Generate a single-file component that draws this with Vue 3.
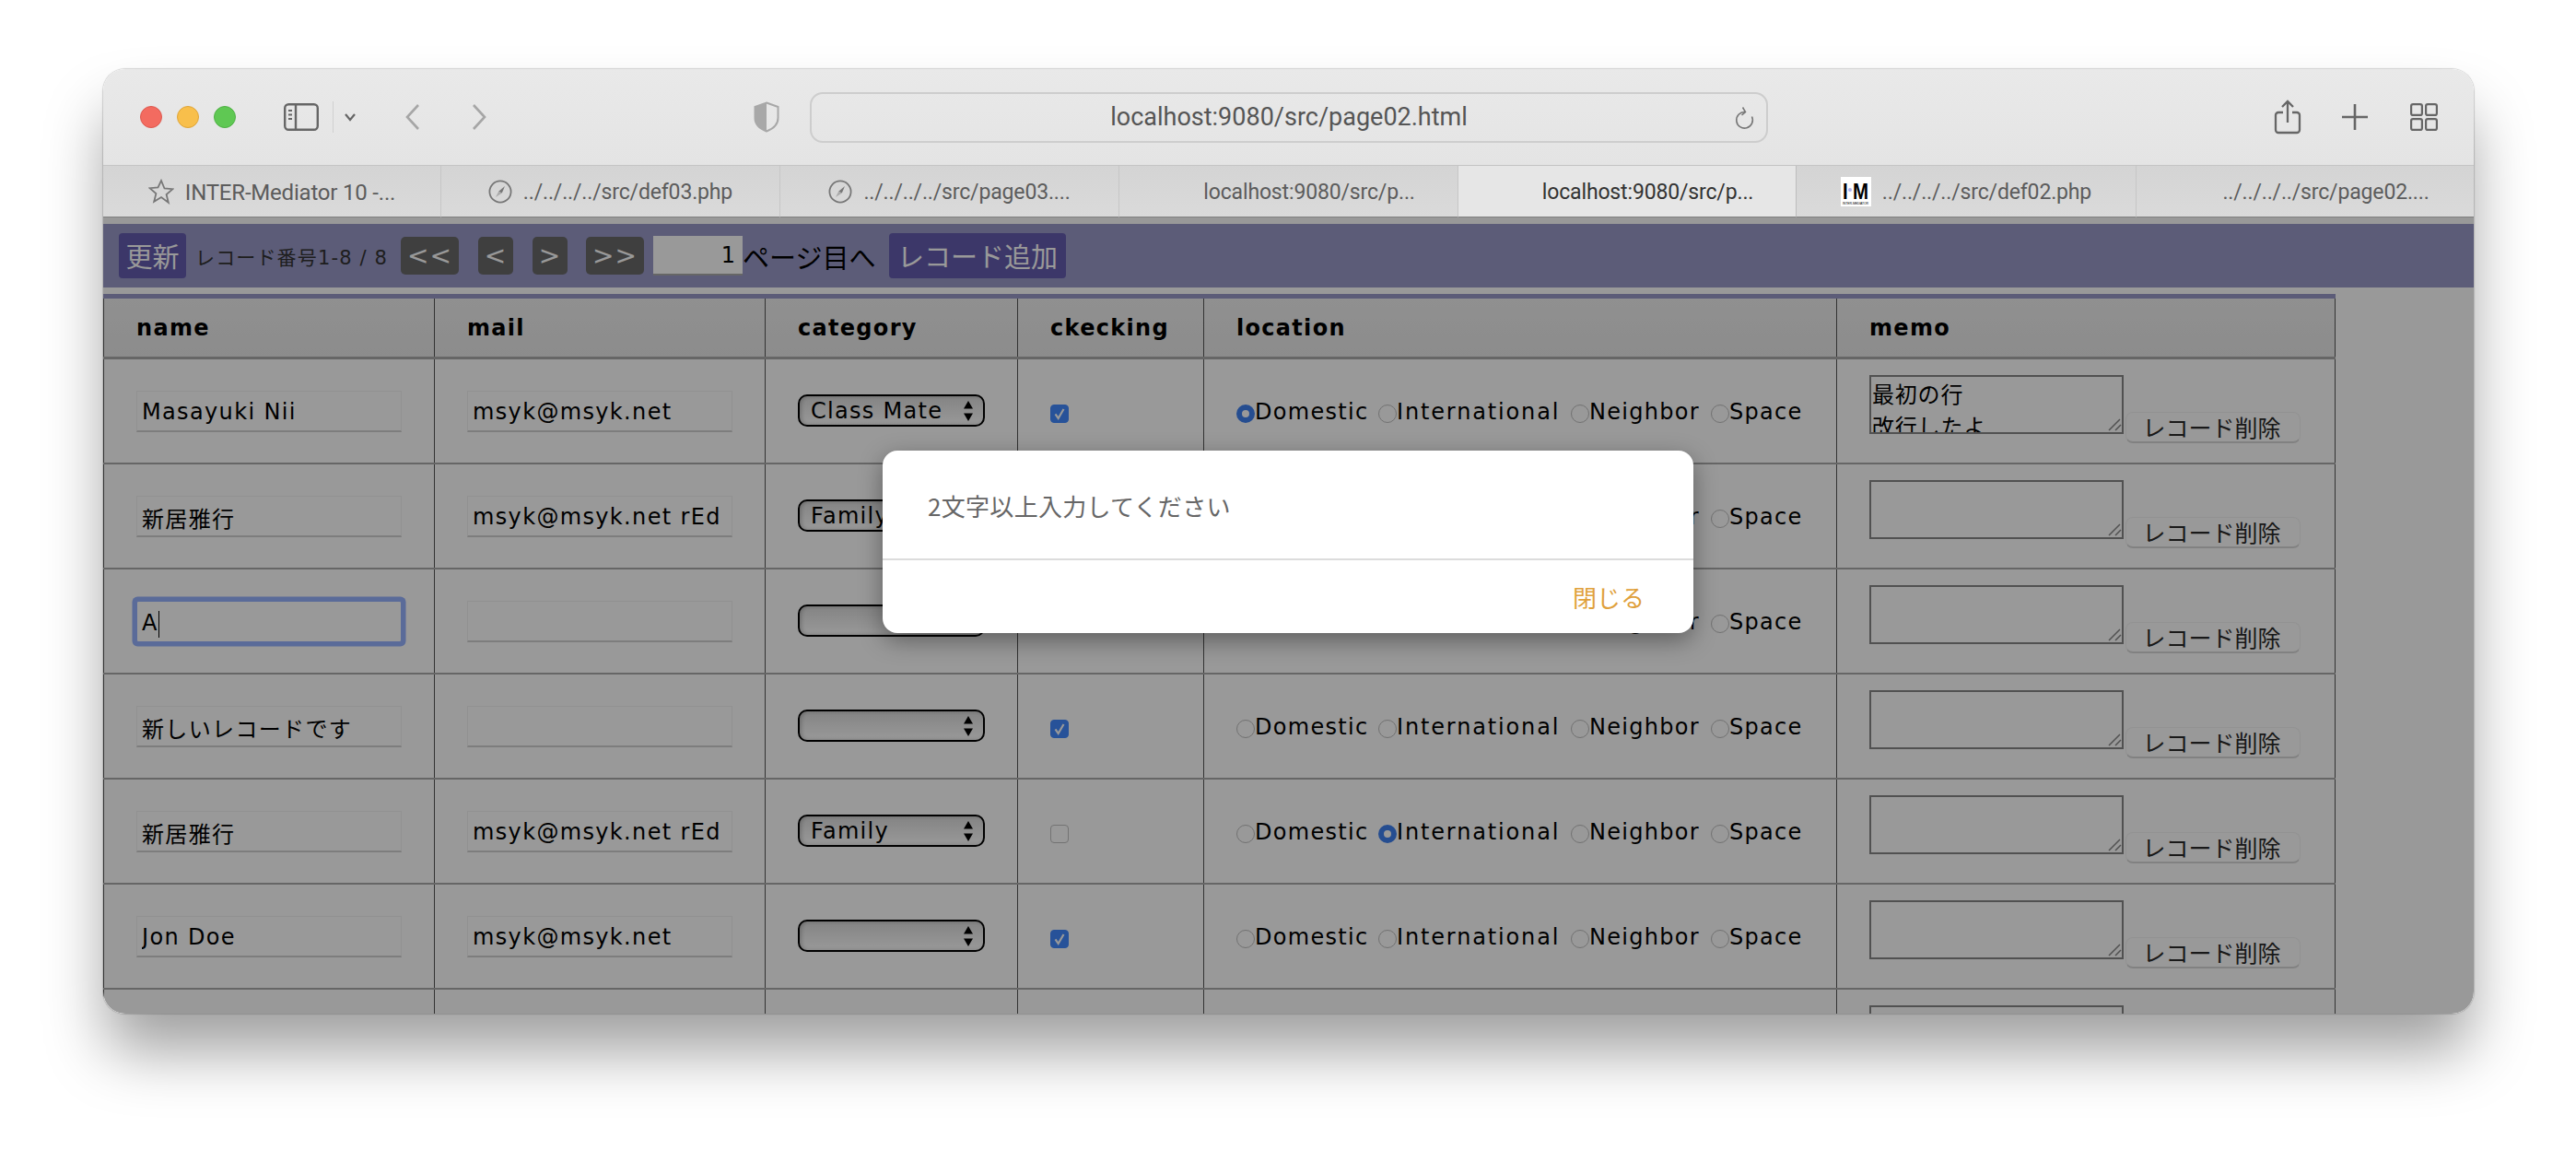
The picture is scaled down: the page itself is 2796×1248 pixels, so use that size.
<script setup>
const tabs = [
  { text: 'INTER-Mediator 10 -...', icon: 'star', w: 367, wide: true },
  { text: '../../../../src/def03.php', icon: 'compass', w: 368 },
  { text: '../../../../src/page03....', icon: 'compass', w: 368 },
  { text: 'localhost:9080/src/p...', icon: 'blank', w: 368 },
  { text: 'localhost:9080/src/p...', icon: 'blank', w: 367, active: true },
  { text: '../../../../src/def02.php', icon: 'im', w: 369 },
  { text: '../../../../src/page02....', icon: 'blank', w: 366 }
]
const places = [
  { label: 'Domestic', w: 154 },
  { label: 'International', w: 209 },
  { label: 'Neighbor', w: 152 },
  { label: 'Space', w: 100 }
]
const rows = [
  { name: 'Masayuki Nii', mail: 'msyk@msyk.net', cat: 'Class Mate', check: true, loc: 'Domestic', memo: '最初の行\n改行したよ' },
  { name: '新居雅行', mail: 'msyk@msyk.net rEd', cat: 'Family', check: false, loc: '', memo: '' },
  { name: 'A', mail: '', cat: '', check: false, loc: '', memo: '', focus: true },
  { name: '新しいレコードです', mail: '', cat: '', check: true, loc: '', memo: '' },
  { name: '新居雅行', mail: 'msyk@msyk.net rEd', cat: 'Family', check: false, loc: 'International', memo: '' },
  { name: 'Jon Doe', mail: 'msyk@msyk.net', cat: '', check: true, loc: '', memo: '' },
  { name: '', mail: '', cat: '', check: false, loc: '', memo: '', ghost: true }
]
</script>

<template>
  <div class="stage">
    <div class="window">
      <header class="toolbar">
        <span class="light red"></span>
        <span class="light yellow"></span>
        <span class="light green"></span>
        <svg class="sidebar-icon" viewBox="0 0 38 30" fill="none" stroke="#666" stroke-width="2.4">
          <rect x="1.2" y="1.2" width="35.6" height="27.6" rx="4" />
          <path d="M13 1.2V28.8" />
          <path d="M5 8h4M5 12.5h4M5 17h4" stroke-width="1.8" />
        </svg>
        <span class="tool-divider"></span>
        <svg class="chev" viewBox="0 0 14 10" fill="none" stroke="#666" stroke-width="2.2">
          <path d="M2 2l5 6 5-6" />
        </svg>
        <svg class="nav back" viewBox="0 0 18 30" fill="none" stroke="#a6a6a6" stroke-width="2.6">
          <path d="M15 2L3 15l12 13" />
        </svg>
        <svg class="nav forward" viewBox="0 0 18 30" fill="none" stroke="#a6a6a6" stroke-width="2.6">
          <path d="M3 2l12 13L3 28" />
        </svg>
        <svg class="shield" viewBox="0 0 28 34" fill="none">
          <path d="M14 1.5L26.5 6v12c0 7-6 12-12.5 14.5C7.500 30 1.500 25 1.500 18V6z" stroke="#a8a8a8" stroke-width="2" />
          <path d="M14 1.500L1.500 6v12c0 7 6 12 12.500 14.500z" fill="#a8a8a8" />
        </svg>
        <div class="urlbar">
          <span class="url">localhost:9080/src/page02.html</span>
          <svg class="reload" viewBox="0 0 22 26" fill="none" stroke="#777" stroke-width="1.600">
            <path d="M18.500 11.500a8.800 8.800 0 1 1-7.500-5" />
            <path d="M8.500 1.500l3 5-4 3.500" />
          </svg>
        </div>
        <svg class="share" viewBox="0 0 30 38" fill="none" stroke="#666" stroke-width="2.300">
          <path d="M15 25V2M9 8l6-6 6 6" />
          <path d="M10 14H5a3 3 0 0 0-3 3v16a3 3 0 0 0 3 3h20a3 3 0 0 0 3-3V17a3 3 0 0 0-3-3h-5" />
        </svg>
        <svg class="plus" viewBox="0 0 28 28" stroke="#666" stroke-width="2.600">
          <path d="M14 0v28M0 14h28" />
        </svg>
        <svg class="grid-icon" viewBox="0 0 30 30" fill="none" stroke="#666" stroke-width="2.200">
          <rect x="1.100" y="1.100" width="11.800" height="11.800" rx="2" />
          <rect x="17.100" y="1.100" width="11.800" height="11.800" rx="2" />
          <rect x="1.100" y="17.100" width="11.800" height="11.800" rx="2" />
          <rect x="17.100" y="17.100" width="11.800" height="11.800" rx="2" />
        </svg>
      </header>

      <nav class="tabs">
        <div v-for="(t, i) in tabs" :key="i" class="tab" :class="{ active: t.active, wide: t.wide }" :style="{ width: t.w + 'px' }">
          <svg v-if="t.icon === 'star'" class="tab-icon star" viewBox="0 0 28 28" fill="none" stroke="#777" stroke-width="1.800">
            <path d="M14 2l3.500 8.500 9 .7-6.900 5.800 2.200 8.800L14 20l-7.800 4.800 2.200-8.800-6.900-5.800 9-.7z" />
          </svg>
          <svg v-else-if="t.icon === 'compass'" class="tab-icon compass" viewBox="0 0 26 26" fill="none" stroke="#777" stroke-width="1.800">
            <circle cx="13" cy="13" r="11.600" />
            <path d="M18 7l-3.200 7.500-3.600-1.800z" fill="#777" stroke="none" />
            <path d="M8 19l3.200-6.300 3.600 1.800z" fill="#aaa" stroke="none" />
          </svg>
          <svg v-else-if="t.icon === 'im'" class="tab-icon im" viewBox="0 0 33 32">
            <rect width="33" height="32" fill="#fff" />
            <text x="2" y="24" font-size="24" font-weight="700" font-family="Liberation Sans" textLength="28" lengthAdjust="spacingAndGlyphs">I M</text>
            <circle cx="10" cy="14" r="2" fill="#b0b0f0" />
            <text x="2" y="30" font-size="4" font-family="Liberation Sans" textLength="28" lengthAdjust="spacingAndGlyphs">INTER-MEDIATOR</text>
          </svg>
          <span v-else class="tab-icon blank"></span>
          <span class="tab-text">{{ t.text }}</span>
        </div>
      </nav>

      <main class="page">
        <div class="pager">
          <button class="primary refresh">更新</button>
          <span class="record-count">レコード番号1-8 / 8</span>
          <button class="step wide first">&lt;&lt;</button>
          <button class="step prev">&lt;</button>
          <button class="step next">&gt;</button>
          <button class="step wide last">&gt;&gt;</button>
          <input class="page-input" value="1" />
          <span class="page-suffix">ページ目へ</span>
          <button class="primary add">レコード追加</button>
        </div>

        <div class="table">
          <div class="row head">
            <div class="cell c-name">name</div>
            <div class="cell c-mail">mail</div>
            <div class="cell c-cat">category</div>
            <div class="cell c-check">ckecking</div>
            <div class="cell c-loc">location</div>
            <div class="cell c-memo">memo</div>
          </div>
          <div v-for="(r, i) in rows" :key="i" class="row">
            <div class="cell c-name">
              <span v-if="!r.ghost" class="field-wrap" :class="{ focused: r.focus }">
                <input class="field" :value="r.name" />
                <i v-if="r.focus" class="caret"></i>
              </span>
            </div>
            <div class="cell c-mail">
              <input v-if="!r.ghost" class="field" :value="r.mail" />
            </div>
            <div class="cell c-cat">
              <div v-if="!r.ghost" class="select">
                <span>{{ r.cat }}</span>
                <svg class="arrows" viewBox="0 0 12 22" fill="#000">
                  <path d="M6 0l5 8.500H1zM6 22l-5-8.500h10z" />
                </svg>
              </div>
            </div>
            <div class="cell c-check">
              <span v-if="!r.ghost" class="checkbox" :class="{ on: r.check }">
                <svg v-if="r.check" viewBox="0 0 20 20" fill="none" stroke="#fff" stroke-width="2.400">
                  <path d="M5 10.500l3.500 5L15 4.500" />
                </svg>
              </span>
            </div>
            <div class="cell c-loc">
              <template v-if="!r.ghost">
                <label v-for="p in places" :key="p.label" class="radio-item" :class="{ long: p.label === 'International' }" :style="{ width: p.w + 'px' }">
                  <span class="radio" :class="{ on: r.loc === p.label }"></span>{{ p.label }}
                </label>
              </template>
            </div>
            <div class="cell c-memo">
              <span class="memo-wrap">
                <textarea class="memo" :value="r.memo"></textarea>
                <svg class="grip" viewBox="0 0 15 14" fill="none" stroke="#888" stroke-width="1.500">
                  <path d="M1 13L13 1M8 13l6-6" />
                </svg>
              </span>
              <button v-if="!r.ghost" class="delete">レコード削除</button>
            </div>
          </div>
        </div>
      </main>

      <div class="overlay"></div>
      <div class="modal">
        <div class="modal-body">2文字以上入力してください</div>
        <div class="modal-foot"><span class="close">閉じる</span></div>
      </div>
    </div>
  </div>
</template>

<style>
html, body { margin: 0; background: #fff; }
</style>

<style scoped>
.stage {
  width: 2796px;
  height: 1248px;
  padding: 75px 0 0 112px;
  box-sizing: border-box;
  overflow: hidden;
  background: #fff;
}
.window {
  position: relative;
  width: 2573px;
  height: 1025px;
  border-radius: 24px;
  overflow: hidden;
  background: #fff;
}
.stage::before {
  content: '';
  position: absolute;
  left: 112px;
  top: 75px;
  width: 2573px;
  height: 1025px;
  border-radius: 24px;
  box-shadow: 0 0 1px 1px rgba(0, 0, 0, .16), 0 44px 66px -4px rgba(0, 0, 0, .38);
}
.toolbar {
  height: 105px;
  display: flex;
  align-items: center;
  padding-left: 40px;
  box-sizing: border-box;
  background: linear-gradient(#e9e9e9, #e4e4e4);
  border-bottom: 1px solid #c4c4c4;
  position: relative;
}
.light { width: 24px; height: 24px; border-radius: 50%; margin-right: 16px; box-sizing: border-box; }
.red { background: #f36b60; border: 1px solid #dd5a50; }
.yellow { background: #f8bf4b; border: 1px solid #dfa53a; }
.green { background: #5fc853; border: 1px solid #4fb045; }
.sidebar-icon { width: 38px; height: 30px; margin-left: 36px; }
.tool-divider { width: 1px; height: 34px; background: #d0d0d0; margin-left: 15px; }
.chev { width: 14px; height: 10px; margin-left: 11px; }
.nav { width: 18px; height: 30px; }
.back { margin-left: 52px; }
.forward { margin-left: 54px; }
.shield { width: 28px; height: 34px; margin-left: 289px; }
.urlbar {
  width: 1040px;
  height: 55px;
  margin-left: 33px;
  border: 2px solid #cdcdcd;
  border-radius: 14px;
  box-sizing: border-box;
  display: flex;
  align-items: center;
  justify-content: center;
  position: relative;
}
.url { font: 27px Roboto, sans-serif; color: #555; }
.reload { position: absolute; right: 12px; top: 13px; width: 22px; height: 26px; }
.share { width: 30px; height: 38px; margin-left: 549px; }
.plus { width: 28px; height: 28px; margin-left: 44px; }
.grid-icon { width: 30px; height: 30px; margin-left: 46px; }

.tabs { display: flex; height: 56px; }
.tab {
  box-sizing: border-box;
  display: flex;
  align-items: center;
  justify-content: center;
  gap: 12px;
  background: linear-gradient(#d4d4d4, #dadada);
  border-right: 1px solid #c6c6c6;
  border-bottom: 1px solid #808080;
  font: 23px Roboto, sans-serif;
  letter-spacing: -.15px;
  color: #5c5c5c;
}
.tab-text { padding-top: 2px; }
.tab.wide { font-size: 24px; letter-spacing: -.2px; }
.tab.active { background: #e6e6e6; color: #333; border-right: 1px solid #bdbdbd; }
.tab:last-child { border-right: 0; }
.tab-icon.star { width: 28px; height: 28px; }
.tab-icon.compass { width: 26px; height: 26px; }
.tab-icon.im { width: 33px; height: 32px; }
.tab-icon.blank { width: 33px; height: 32px; }

.page { height: 864px; overflow: hidden; padding-top: 7px; box-sizing: border-box; background: #fff; }
.pager {
  height: 69px;
  display: flex;
  align-items: center;
  padding-left: 17px;
  background: #9999c8;
  font-family: "Noto Sans CJK JP", sans-serif;
}
button { font-family: "Noto Sans CJK JP", sans-serif; }
.primary {
  height: 49px;
  padding: 0;
  border: 0;
  border-radius: 4px;
  background: #645daf;
  color: #fff;
  font-size: 29px;
  line-height: 49px;
}
.refresh { width: 73px; }
.add { width: 192px; margin-left: 13px; }
.record-count { margin-left: 10px; width: 210px; font: 21px "DejaVu Sans", "Noto Sans CJK JP", sans-serif; letter-spacing: 1.150px; color: #333; white-space: nowrap; }
.step {
  height: 41px;
  width: 38px;
  padding: 0;
  border: 0;
  border-radius: 5px;
  background: #6a6a6a;
  color: #fff;
  font: 28px "DejaVu Sans", sans-serif;
  letter-spacing: 1px;
}
.step.wide { width: 63px; letter-spacing: 1px; }
.first { margin-left: 13px; }
.prev { margin-left: 21px; }
.next { margin-left: 21px; }
.last { margin-left: 20px; }
.page-input {
  width: 97px;
  height: 43px;
  margin-left: 10px;
  padding: 0 8px 0 0;
  box-sizing: border-box;
  border: 0;
  border-bottom: 2px solid #aaa;
  background: #fff;
  text-align: right;
  font: 24px "DejaVu Sans", sans-serif;
  color: #000;
  outline: none;
}
.page-suffix { font-size: 29px; color: #000; white-space: nowrap; width: 146px; }

.table { margin-top: 7px; width: 2423px; border-top: 5px solid #9999c8; font-family: "DejaVu Sans", "Noto Sans CJK JP", sans-serif; }
.row { display: flex; height: 114px; border-bottom: 2px solid #aaa; box-sizing: border-box; background: #fff; }
.row.head {
  height: 66px;
  border-bottom: 3px solid #aaa;
  background: linear-gradient(#f0f0f0, #eaeaea);
  font-size: 25px;
  font-weight: 700;
  letter-spacing: 1.300px;
  color: #000;
}
.cell {
  box-sizing: border-box;
  display: flex;
  align-items: center;
  border-right: 1px solid #555;
  padding-left: 35px;
  font-size: 24px;
}
.c-name { width: 360px; border-left: 1px solid #555; padding-left: 35px; }
.c-mail { width: 359px; }
.c-cat { width: 274px; }
.c-check { width: 202px; }
.c-loc { width: 687px; }
.c-memo { width: 541px; }
.row:not(.head) .c-memo { align-items: flex-start; padding-top: 17px; }

.field-wrap { position: relative; display: block; height: 45px; }
.field {
  width: 288px;
  height: 45px;
  box-sizing: border-box;
  padding: 3px 1px 0 5px;
  border: 1px solid #f2f2f2;
  border-bottom: 2px solid #d0d0d0;
  background: #fff;
  color: #000;
  font: 24px "DejaVu Sans", "Noto Sans CJK JP", sans-serif;
  letter-spacing: 1.350px;
  outline: none;
}
.focused .field { border: 1px solid #96b2ff; border-radius: 2px; box-shadow: 0 0 0 4.500px #96b2ff; }
.caret { position: absolute; left: 24px; top: 11px; width: 1px; height: 29px; background: #000; }

.select {
  width: 203px;
  height: 35px;
  margin-top: -1px;
  box-sizing: border-box;
  display: flex;
  align-items: center;
  justify-content: space-between;
  padding: 0 10px 0 12px;
  border: 2px solid #000;
  border-radius: 10px;
  background: linear-gradient(#dcdcdc, #fff);
  box-shadow: inset 2px 0 4px rgba(0, 0, 0, .2);
  font-size: 24px;
  letter-spacing: 1.300px;
  color: #000;
  white-space: nowrap;
}
.arrows { width: 12px; height: 22px; }

.checkbox {
  width: 20px;
  height: 20px;
  border-radius: 4px;
  box-sizing: border-box;
  border: 1px solid #c0c0c0;
  margin-top: 5px;
  display: block;
}
.checkbox.on { background: #4189ff; border-color: #4189ff; }
.checkbox svg { display: block; width: 18px; height: 18px; }

.radio-item { display: flex; flex: none; align-items: center; color: #000; letter-spacing: 1.300px; white-space: nowrap; padding-top: 1px; }
.radio-item.long { letter-spacing: 1.850px; }
.radio {
  width: 20px;
  height: 20px;
  box-sizing: border-box;
  border: 1px solid #bdbdbd;
  border-radius: 50%;
  margin-top: 4px;
  flex: none;
}
.radio.on { border: 6px solid #3f80f0; background: #fff; }

.memo-wrap { position: relative; display: block; width: 276px; height: 64px; }
.memo {
  display: block;
  width: 276px;
  height: 64px;
  box-sizing: border-box;
  padding: 0 1px;
  border: 2px solid #888;
  border-radius: 0;
  background: #fff;
  color: #000;
  font: 24px/35px "Noto Sans CJK JP", sans-serif;
  letter-spacing: .8px;
  outline: none;
  overflow: hidden;
  resize: none;
}
.grip { position: absolute; right: 2px; bottom: 3px; width: 15px; height: 14px; }
.delete {
  width: 190px;
  height: 34px;
  margin: 40px 0 0 2px;
  padding: 0 3px 0 0;
  border: 1px solid #f4f4f4;
  border-bottom: 2px solid #d8d8d8;
  border-radius: 8px;
  background: #fff;
  color: #2a2a2a;
  font-size: 25px;
  line-height: 27px;
}

.overlay { position: absolute; left: 0; right: 0; top: 161px; bottom: 0; background: rgba(0, 0, 0, .4); }
.modal {
  position: absolute;
  left: 846px;
  top: 414px;
  width: 880px;
  height: 198px;
  border-radius: 16px;
  background: #fff;
  box-shadow: 0 8px 26px rgba(0, 0, 0, .38);
  font-family: "Noto Sans CJK JP", sans-serif;
}
.modal-body {
  height: 119px;
  box-sizing: border-box;
  padding: 40px 0 0 49px;
  font-size: 26px;
  line-height: 40px;
  letter-spacing: .3px;
  color: #666;
  border-bottom: 2px solid #dcdcdc;
}
.modal-foot { display: flex; justify-content: flex-end; padding: 20px 53px 0 0; }
.close { font-size: 26px; line-height: 40px; color: #e0a13c; }
</style>
